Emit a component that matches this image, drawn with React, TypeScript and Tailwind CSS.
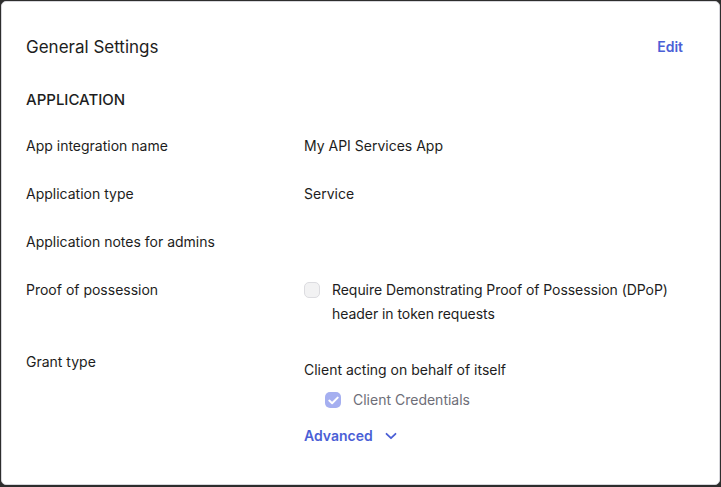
import React from 'react';

const Row: React.FC<{ label: string; children?: React.ReactNode; className?: string }> = ({ label, children, className }) => (
    <div className={`flex ${className ?? ''}`}>
        <div className="w-[278px] shrink-0 leading-6">{label}</div>
        <div className="flex-1 leading-6">{children}</div>
    </div>
);

export default function App() {
    return (
        <div className="w-[721px] h-[487px] bg-[#2d2d2d] pt-px px-px pb-[2px]" style={{ fontFamily: 'Inter, "Noto Sans", sans-serif' }}>
            <div className="h-full bg-white border border-[#d7d7dc] rounded-[5px] text-[#1d1d21] text-[14px]">
                <div className="flex items-center justify-between pl-[24px] pr-[36px] pt-[33px]">
                    <h2 className="text-[17px] leading-6 font-normal">General Settings</h2>
                    <button className="text-[#4b5fd6] font-semibold text-[14px] leading-6">Edit</button>
                </div>
                <div className="pl-[24px] pr-[36px]">
                    <h3 className="mt-[29px] text-[15px] leading-6 font-medium uppercase">Application</h3>
                    <div className="mt-[22px] flex flex-col gap-[24px]">
                        <Row label="App integration name">My API Services App</Row>
                        <Row label="Application type">Service</Row>
                        <Row label="Application notes for admins" />
                        <Row label="Proof of possession">
                            <label className="flex items-start gap-[12px] tracking-[-0.05px]">
                                <span className="mt-[4px] size-[16px] shrink-0 rounded-[5px] bg-[#f2f2f3] border border-[#dcdce0]" />
                                <span className="w-[370px]">Require Demonstrating Proof of Possession (DPoP) header in token requests</span>
                            </label>
                        </Row>
                        <Row label="Grant type">
                            <div className="pt-[8px]">
                                <p>Client acting on behalf of itself</p>
                                <label className="mt-[6px] ml-[21px] flex items-center gap-[12px] text-[#6e6e78]">
                                    <span className="size-[16px] rounded-[5px] bg-[#a5aff0] flex items-center justify-center">
                                        <svg width="11" height="9" viewBox="0 0 11 9" fill="none">
                                            <path d="M1.3 4.6 L4.1 7.2 L9.7 1.6" stroke="white" strokeWidth="2" strokeLinecap="round" strokeLinejoin="round" />
                                        </svg>
                                    </span>
                                    Client Credentials
                                </label>
                                <button className="mt-[12px] flex items-center gap-[12px] text-[#4b5fd6] font-semibold leading-6">
                                    Advanced
                                    <svg width="12" height="8" viewBox="0 0 12 8" fill="none">
                                        <path d="M1.5 1.8 L6 6.2 L10.5 1.8" stroke="currentColor" strokeWidth="1.8" strokeLinecap="round" strokeLinejoin="round" />
                                    </svg>
                                </button>
                            </div>
                        </Row>
                    </div>
                </div>
            </div>
        </div>
    );
}
